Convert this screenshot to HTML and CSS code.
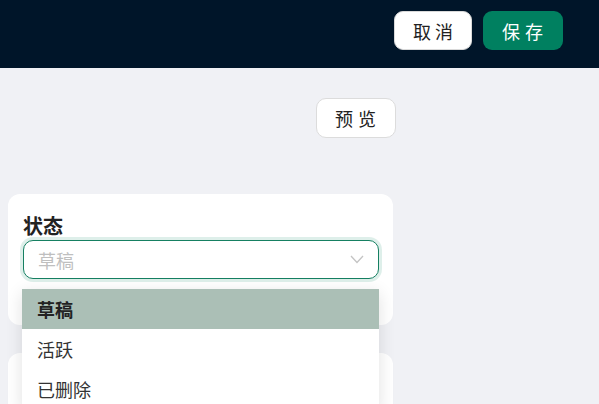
FILE: index.html
```html
<!DOCTYPE html>
<html lang="zh">
<head>
<meta charset="utf-8">
<link rel="stylesheet" href="styles.css">
</head>
<body>
<header class="topbar">
  <button class="btn btn-cancel">取消</button>
  <button class="btn btn-save">保存</button>
</header>
<main class="content">
  <div class="preview-row">
    <button class="btn-preview">预览</button>
  </div>
  <section class="card">
    <div class="label">状态</div>
    <div class="select-wrap">
      <div class="select">
        <span class="placeholder">草稿</span>
        <svg class="chev" width="14" height="9" viewBox="0 0 14 9"><path d="M1 1 L7 7.5 L13 1" fill="none" stroke="#c4c4c4" stroke-width="1.3"/></svg>
      </div>
      <ul class="menu">
        <li class="opt active">草稿</li>
        <li class="opt">活跃</li>
        <li class="opt">已删除</li>
      </ul>
    </div>
  </section>
  <section class="card card2"></section>
</main>
</body>
</html>
```
FILE: styles.css
```css
* { box-sizing: border-box; }
html, body { margin: 0; padding: 0; }
body {
  background: #f0f1f5;
  font-family: "Noto Sans CJK SC", "Noto Sans", sans-serif;
  width: 599px;
  height: 404px;
  overflow: hidden;
}
.topbar {
  height: 68px;
  background: #001529;
  display: flex;
  justify-content: flex-end;
  align-items: flex-start;
  padding: 11px 36px 0 0;
  gap: 11px;
}
.btn {
  height: 39px;
  border-radius: 9px;
  border: none;
  font-family: inherit;
  font-size: 18px;
  letter-spacing: 4px;
  text-indent: 4px;
  padding: 0;
}
.btn-cancel {
  width: 78px;
  background: #fff;
  color: #222;
  border: 1px solid #d9d9d9;
}
.btn-save {
  width: 80px;
  background: #008060;
  color: #fff;
  letter-spacing: 5px;
}
.content {
  padding: 30px 0 0 8px;
  width: 396px;
}
.preview-row {
  display: flex;
  justify-content: flex-end;
}
.btn-preview {
  width: 80px;
  height: 40px;
  background: #fff;
  border: 1px solid #dcdcdc;
  border-radius: 10px;
  font-family: inherit;
  font-size: 18px;
  letter-spacing: 5px;
  text-indent: 4px;
  color: #222;
  padding: 0;
}
.card {
  margin-top: 56px;
  width: 385px;
  background: #fff;
  border-radius: 12px;
  padding: 17px 14px 46px 15px;
}
.card2 {
  margin-top: 28px;
  height: 80px;
  padding: 0;
}
.label {
  font-size: 20px;
  font-weight: 700;
  color: #222;
  line-height: 29px;
}
.select-wrap { position: relative; }
.select {
  height: 39px;
  border: 1.5px solid #168062;
  border-radius: 10px;
  box-shadow: 0 0 0 3px rgba(0, 128, 96, 0.13);
  display: flex;
  align-items: center;
  justify-content: space-between;
  padding: 0 14px 0 14px;
  background: #fff;
}
.placeholder {
  color: #bfbfbf;
  font-size: 18px;
}
.menu {
  position: absolute;
  top: 49px;
  left: -1px;
  width: 357px;
  margin: 0;
  padding: 0;
  list-style: none;
  background: #fff;
  box-shadow: 0 4px 16px rgba(0, 0, 0, 0.12);
  z-index: 5;
}
.opt {
  height: 40px;
  line-height: 40px;
  padding-left: 15px;
  font-size: 18px;
  color: #333;
}
.opt.active {
  background: #abbfb6;
  font-weight: 700;
  color: #222;
}
```
